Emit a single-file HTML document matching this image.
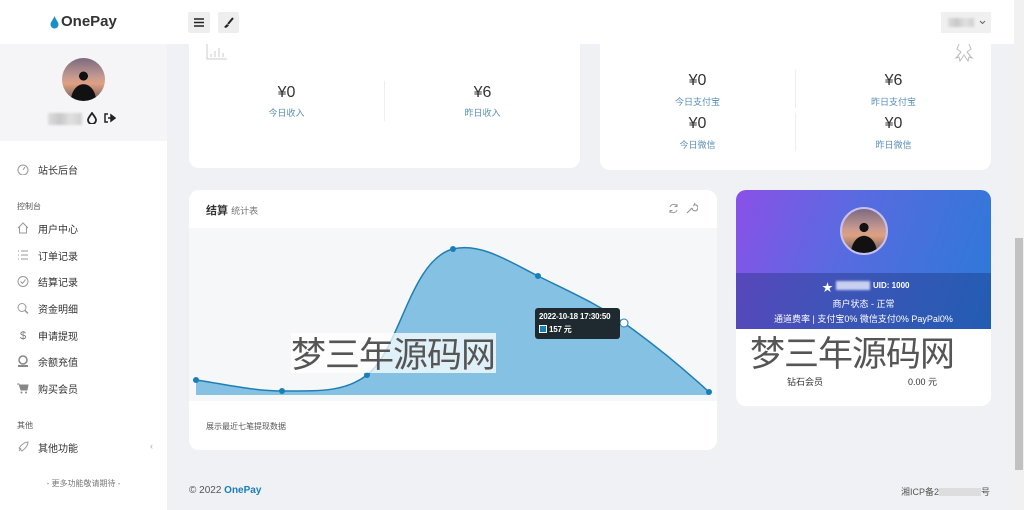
<!DOCTYPE html>
<html><head><meta charset="utf-8"><style>
*{margin:0;padding:0;box-sizing:border-box}
body{width:1024px;height:510px;overflow:hidden;background:#f0f1f5;font-family:"Liberation Sans","Noto Sans CJK SC",sans-serif;position:relative;color:#333}
.a{position:absolute}
.card{position:absolute;background:#fff;border-radius:10px}
.cn{font-size:9px;color:#5a8fb8;text-align:center}
.num{font-size:16px;color:#333;text-align:center;font-weight:500}
.av{border-radius:50%;background:radial-gradient(ellipse 30% 40% at 50% 100%,#111 0 95%,transparent 100%),radial-gradient(circle at 50% 42%,#111 0 13%,transparent 14%),linear-gradient(#7a6a80 0%,#c89a90 45%,#e0a080 60%,#6a5a60 100%)}
.nav{position:absolute;left:17px;font-size:10px;color:#333;margin-top:-3px}
.nav svg{position:absolute;left:0;top:1px}
.nav span{margin-left:21px}
.blur{background:linear-gradient(90deg,#ddd,#c8c8c8,#e0e0e0,#d0d0d0);filter:blur(1px)}
.wm{font-size:35px;color:#555;font-family:"Noto Sans CJK SC",sans-serif;letter-spacing:-1px;line-height:1}
</style></head><body>
<!-- sidebar -->
<div class="a" style="left:0;top:44px;width:167px;height:466px;background:#fff"></div>
<div class="a" style="left:0;top:44px;width:167px;height:97px;background:#f5f5f7"></div>
<div class="a av" style="left:62px;top:58px;width:43px;height:43px"></div>
<div class="a blur" style="left:48px;top:113px;width:34px;height:12px"></div>
<svg class="a" style="left:87px;top:112px" width="10" height="12" viewBox="0 0 10 12"><path d="M5 1 C7 4 9 6 9 8 A4 4 0 0 1 1 8 C1 6 3 4 5 1Z" fill="none" stroke="#222" stroke-width="1.8"/></svg>
<svg class="a" style="left:104px;top:113px" width="12" height="10" viewBox="0 0 12 10"><path d="M4 1H1V9H4" fill="none" stroke="#222" stroke-width="1.5"/><path d="M4 5H8M7 2L11 5L7 8Z" fill="#222" stroke="#222" stroke-width="1.5"/></svg>
<div class="nav" style="top:165px"><svg width="12" height="12"><circle cx="6" cy="7" r="5" fill="none" stroke="#999"/><path d="M6 7L8 4" stroke="#999"/></svg><span>站长后台</span></div>
<div class="a" style="left:17px;top:201px;font-size:8px;color:#555">控制台</div>
<div class="nav" style="top:224px"><svg width="12" height="12"><path d="M1 6L6 1L11 6M2.5 5V11H9.5V5" fill="none" stroke="#999"/></svg><span>用户中心</span></div>
<div class="nav" style="top:251px"><svg width="12" height="12"><path d="M4 2H11M4 6H11M4 10H11M1 2H2M1 6H2M1 10H2" stroke="#999"/></svg><span>订单记录</span></div>
<div class="nav" style="top:277px"><svg width="12" height="12"><circle cx="6" cy="6.5" r="5" fill="none" stroke="#999"/><path d="M3.5 6.5L5.5 8.5L8.5 4.5" fill="none" stroke="#999"/></svg><span>结算记录</span></div>
<div class="nav" style="top:304px"><svg width="12" height="12"><circle cx="5" cy="5.5" r="4" fill="none" stroke="#999"/><path d="M8 8.5L11 11.5" stroke="#999" stroke-width="1.5"/></svg><span>资金明细</span></div>
<div class="nav" style="top:331px"><svg width="12" height="12"><text x="3" y="10" font-size="11" fill="#777" font-family="Liberation Sans">$</text></svg><span>申请提现</span></div>
<div class="nav" style="top:357px"><svg width="12" height="12"><circle cx="6" cy="5" r="4" fill="none" stroke="#888" stroke-width="1.5"/><path d="M1 11H11" stroke="#888" stroke-width="2"/></svg><span>余额充值</span></div>
<div class="nav" style="top:384px"><svg width="12" height="12"><path d="M0 2H2L4 8H10L11 3H3" fill="#888" stroke="#888"/><circle cx="4.5" cy="10.5" r="1" fill="#888"/><circle cx="9" cy="10.5" r="1" fill="#888"/></svg><span>购买会员</span></div>
<div class="a" style="left:17px;top:420px;font-size:8px;color:#555">其他</div>
<div class="nav" style="top:443px"><svg width="12" height="12"><path d="M2 10L4 7M5 10C9 7 11 4 11 1C8 1 5 3 2 7Z" fill="none" stroke="#999"/></svg><span>其他功能</span></div>
<div class="a" style="left:150px;top:441px;font-size:9px;color:#aaa">‹</div>
<div class="a" style="left:0;width:167px;top:478px;font-size:8px;color:#777;text-align:center">- 更多功能敬请期待 -</div>
<!-- top left card -->
<div class="card" style="left:189px;top:30px;width:391px;height:138px"></div>
<svg class="a" style="left:206px;top:44px" width="22" height="16"><path d="M1 0V15H21M5 13V10M9 13V7M13 13V4M17 13V9" stroke="#ccc" fill="none"/></svg>
<div class="a" style="left:384px;top:81px;width:1px;height:40px;background:#eee"></div>
<div class="a num" style="left:189px;width:195px;top:84px">¥0</div>
<div class="a cn" style="left:189px;width:195px;top:106px">今日收入</div>
<div class="a num" style="left:385px;width:195px;top:84px">¥6</div>
<div class="a cn" style="left:385px;width:195px;top:106px">昨日收入</div>
<!-- top right card -->
<div class="card" style="left:600px;top:30px;width:391px;height:140px"></div>
<svg class="a" style="left:953px;top:43px" width="22" height="20"><path d="M6 1L4 6L8 9M16 1L18 6L14 9M8 9L3 15L6 14L7 18L11 12L15 18L16 14L19 15L14 9" fill="none" stroke="#bbb"/></svg>
<div class="a" style="left:795px;top:70px;width:1px;height:38px;background:#eee"></div>
<div class="a" style="left:795px;top:113px;width:1px;height:38px;background:#eee"></div>
<div class="a num" style="left:600px;width:195px;top:72px">¥0</div>
<div class="a cn" style="left:600px;width:195px;top:95px">今日支付宝</div>
<div class="a num" style="left:796px;width:195px;top:72px">¥6</div>
<div class="a cn" style="left:796px;width:195px;top:95px">昨日支付宝</div>
<div class="a num" style="left:600px;width:195px;top:115px">¥0</div>
<div class="a cn" style="left:600px;width:195px;top:138px">今日微信</div>
<div class="a num" style="left:796px;width:195px;top:115px">¥0</div>
<div class="a cn" style="left:796px;width:195px;top:138px">昨日微信</div>
<!-- header -->
<div class="a" style="left:0;top:0;width:1014px;height:44px;background:#fff"></div>
<svg class="a" style="left:50px;top:16px" width="9" height="13" viewBox="0 0 9 13"><path d="M4.5 0C6 4 8.5 6 8.5 8.5A4 4 0 0 1 0.5 8.5C0.5 6 3 4 4.5 0Z" fill="#1a8fc8"/></svg>
<div class="a" style="left:61px;top:13px;font-size:15px;font-weight:bold;color:#333">OnePay</div>
<div class="a" style="left:188px;top:12px;width:22px;height:21px;background:#eee;border-radius:2px"><svg class="a" style="left:6px;top:6px" width="10" height="9"><path d="M0 1H10M0 4.5H10M0 8H10" stroke="#222" stroke-width="1.4"/></svg></div>
<div class="a" style="left:218px;top:12px;width:21px;height:21px;background:#eee;border-radius:2px"><svg class="a" style="left:5px;top:5px" width="11" height="11"><path d="M10 1L5 7" stroke="#222" stroke-width="2"/><path d="M4 7L6 8.5L3 11L1 10Z" fill="#222"/></svg></div>
<div class="a" style="left:941px;top:12px;width:50px;height:21px;background:#f0f0f0"><div class="a blur" style="left:7px;top:6px;width:26px;height:9px"></div><svg class="a" style="left:38px;top:8px" width="7" height="5"><path d="M1 1L3.5 3.5L6 1" stroke="#666" fill="none"/></svg></div>
<!-- chart card -->
<div class="card" style="left:189px;top:190px;width:528px;height:260px;overflow:hidden">
<div class="a" style="left:0;top:38px;width:528px;height:173px;background:#f5f7f9"></div>
</div>
<div class="a" style="left:206px;top:202px;font-size:11px;font-weight:bold;color:#333">结算 <span style="font-weight:normal;font-size:9px;color:#777">统计表</span></div>
<svg class="a" style="left:668px;top:203px" width="11" height="11"><path d="M9 3A4 4 0 0 0 2 4M2 8A4 4 0 0 0 9 7" fill="none" stroke="#999"/><path d="M9 1V3.5H6.5M2 10V7.5H4.5" fill="none" stroke="#999"/></svg>
<svg class="a" style="left:686px;top:202px" width="12" height="12"><path d="M1 11L6 6M6 6A3 3 0 1 0 8 3L9 1" fill="none" stroke="#999" stroke-width="1.2"/></svg>
<svg class="a" style="left:0;top:0" width="1024" height="510">
<path d="M196,380 C230,385 255,391 282,391 C320,391 345,392 367,375 C400,350 410,260 453,249 C480,242 510,262 538,276 C570,292 600,305 624,323 C655,345 685,370 709,392 L709,395 L196,395 Z" fill="#85c1e3"/>
<path d="M196,380 C230,385 255,391 282,391 C320,391 345,392 367,375 C400,350 410,260 453,249 C480,242 510,262 538,276 C570,292 600,305 624,323 C655,345 685,370 709,392" fill="none" stroke="#1f7fb5" stroke-width="1.5"/>
<g fill="#1a7fb8"><circle cx="196" cy="380" r="3"/><circle cx="282" cy="391" r="3"/><circle cx="367" cy="375" r="3"/><circle cx="453" cy="249" r="3"/><circle cx="538" cy="276" r="3"/><circle cx="709" cy="392" r="3"/></g>
<circle cx="624" cy="323" r="4" fill="#fff" stroke="#1a7fb8"/>
</svg>
<div class="a" style="left:291px;top:333px;width:205px;height:40px;background:rgba(255,255,255,.75)"></div>
<div class="a wm" style="left:291px;top:335px">梦三年源码网</div>
<div class="a" style="left:535px;top:308px;width:85px;height:31px;background:#1f2a30;border-radius:3px;color:#fff;font-size:8px;padding:3px 4px;font-weight:bold;white-space:nowrap;line-height:11px;letter-spacing:-0.2px">2022-10-18 17:30:50<br><span style="display:inline-block;width:8px;height:8px;background:#1a7fb8;border:1px solid #fff;vertical-align:-1px;margin-top:3px"></span> 157 元</div>
<div class="a" style="left:206px;top:421px;font-size:8px;color:#555">展示最近七笔提现数据</div>
<!-- profile card -->
<div class="card" style="left:736px;top:190px;width:255px;height:216px;overflow:hidden">
<div class="a" style="left:0;top:0;width:255px;height:139px;background:linear-gradient(110deg,#8a50e8 0%,#5a6ae0 40%,#2a7ad8 100%)"></div>
<div class="a" style="left:0;top:83px;width:255px;height:56px;background:rgba(20,40,110,.35)"></div>
</div>
<div class="a av" style="left:840px;top:207px;width:48px;height:48px;border:2px solid #c8c0f0"></div>
<div class="a" style="left:822px;top:279px;font-size:11px;color:#fff">★</div>
<div class="a blur" style="left:836px;top:281px;width:34px;height:9px;background:#c8d0f0"></div>
<div class="a" style="left:873px;top:281px;font-size:8px;color:#fff;font-weight:bold">UID: 1000</div>
<div class="a" style="left:736px;width:255px;top:297px;font-size:9px;color:#fff;text-align:center">商户状态 - 正常</div>
<div class="a" style="left:736px;width:255px;top:312px;font-size:9px;color:#fff;text-align:center">通道费率 |  支付宝0%  微信支付0%  PayPal0%</div>
<div class="a wm" style="left:750px;top:334px">梦三年源码网</div>
<div class="a" style="left:787px;top:375px;font-size:9px;color:#333">钻石会员</div>
<div class="a" style="left:908px;top:375px;font-size:9px;color:#333">0.00 元</div>
<!-- footer -->
<div class="a" style="left:189px;top:485px;font-size:10px;color:#555">© 2022 <b style="color:#1a7fb8">OnePay</b></div>
<div class="a" style="left:901px;top:485px;font-size:9px;color:#555">湘ICP备2<span style="display:inline-block;width:42px;height:8px;background:#ddd;vertical-align:-1px"></span>号</div>
<!-- scrollbar -->
<div class="a" style="left:1014px;top:0;width:10px;height:510px;background:#f1f1f1"></div>
<div class="a" style="left:1015px;top:238px;width:8px;height:232px;background:#c1c1c1"></div>
</body></html>
